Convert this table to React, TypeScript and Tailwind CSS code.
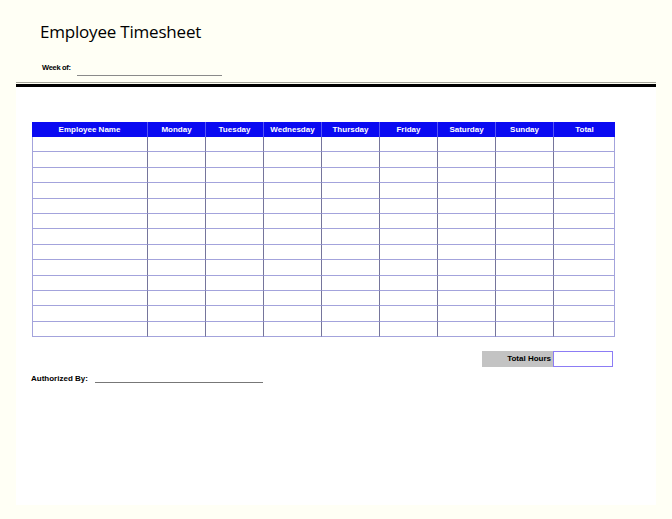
const columns = [
  "Employee Name",
  "Monday",
  "Tuesday",
  "Wednesday",
  "Thursday",
  "Friday",
  "Saturday",
  "Sunday",
  "Total",
];

const rows = Array.from({ length: 13 });

export default function App() {
  return (
    <div className="flex h-[519px] w-[672px] flex-col bg-[#fffff5] font-['Liberation_Sans',Arial,sans-serif] text-black">
      {/* Title block */}
      <div className="h-[82px] pl-10 pt-[21px]">
        <h1 className="font-['Open_Sans',sans-serif] text-[17px] leading-[22px] tracking-[-0.2px]">
          Employee Timesheet
        </h1>
        <div className="ml-[2px] mt-[20px] flex items-start">
          <span className="text-[7.5px] font-bold leading-[9px] tracking-[-0.3px]">Week of:</span>
          <span className="ml-[6px] mt-[12px] w-[145px] border-b border-[#8a8a8a]" />
        </div>
      </div>

      {/* Rules */}
      <div className="mx-4 h-px bg-[#a5a59a]" />
      <div className="mx-4 mt-px h-[3px] bg-black" />

      {/* Sheet */}
      <div className="mx-4 h-[418px] bg-white pl-4 pt-[35px]">
        <div className="grid w-[583px] grid-cols-[116px_repeat(7,58px)_61px]">
          {columns.map((c, i) => (
            <div
              key={c}
              className={
                "flex h-[15px] items-center justify-center bg-[#0a0af2] text-[8px] font-bold text-white " +
                (i < columns.length - 1 ? "border-r border-[#5555f5]" : "")
              }
            >
              {c}
            </div>
          ))}
          {rows.map((_, r) =>
            columns.map((c, i) => (
              <div
                key={r + c}
                className={
                  "h-[15.4px] border-b border-r border-b-[#a3a3dc] border-r-[#75759c] " +
                  (i === 0 ? "border-l border-l-[#a3a3dc]" : "") +
                  (i === columns.length - 1 ? " border-r-[#a3a3dc]" : "")
                }
              />
            ))
          )}
        </div>

        {/* Total hours */}
        <div className="mt-[14px] flex w-[581px] justify-end">
          <div className="flex h-[16px] w-[71px] items-center justify-end bg-[#c3c3c3] pr-[2px] text-[8px] font-bold">
            Total Hours
          </div>
          <div className="h-[16px] w-[60px] border border-[#8c7cf5] bg-white" />
        </div>

        {/* Signature */}
        <div className="-ml-px mt-[7px] flex items-end">
          <span className="text-[8px] font-bold leading-[9px]">Authorized By:</span>
          <span className="ml-[7px] w-[168px] border-b border-[#777]" />
        </div>
      </div>
    </div>
  );
}
